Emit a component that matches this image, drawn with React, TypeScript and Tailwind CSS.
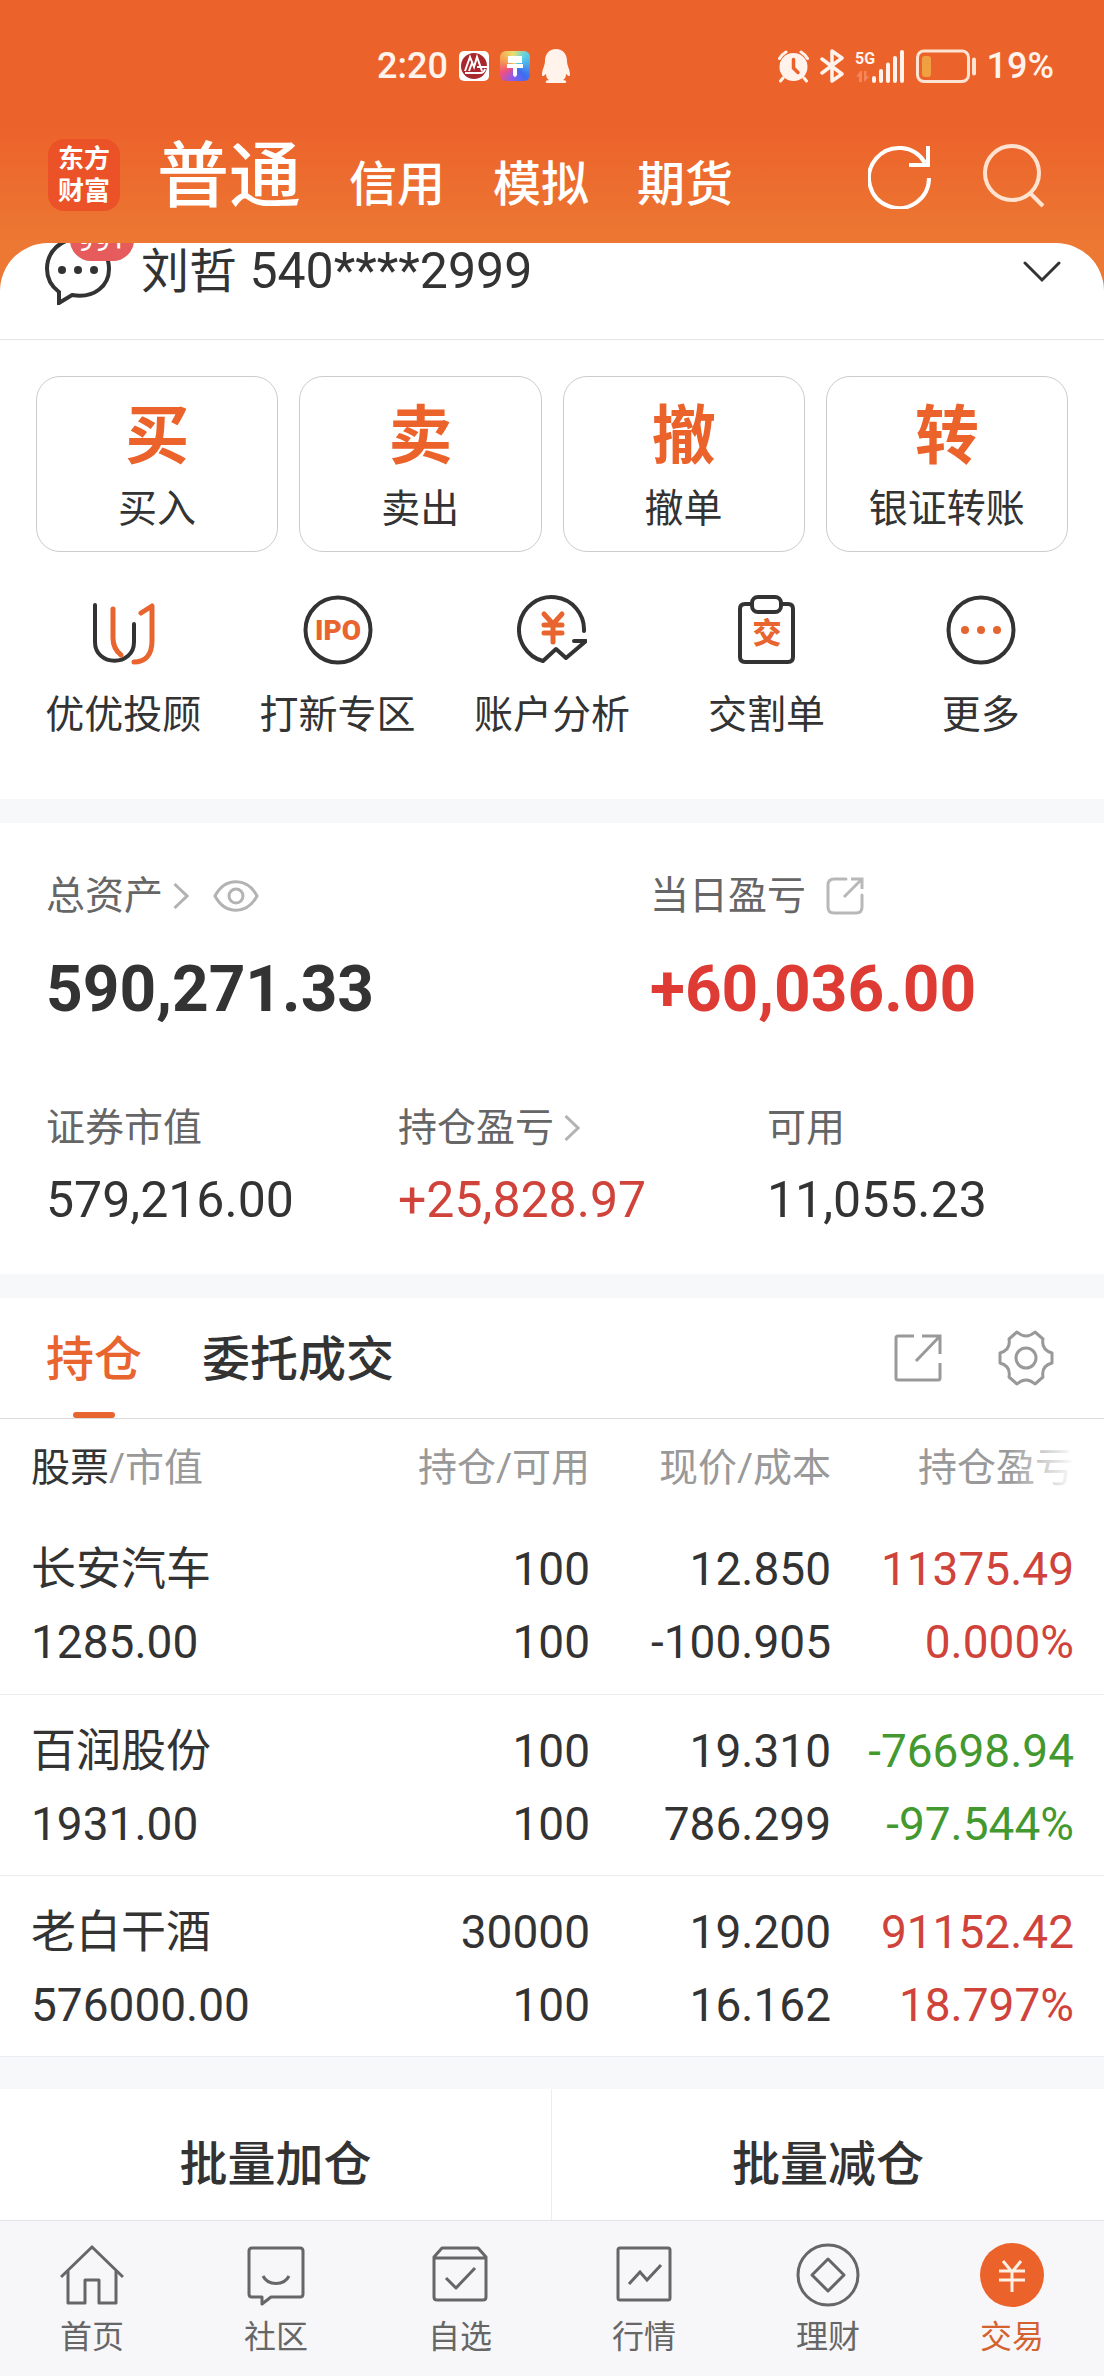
import React from "react";

interface Holding {
  name: string;
  marketValue: string;
  position: string;
  available: string;
  price: string;
  cost: string;
  profit: string;
  profitRate: string;
}

const holdings: Holding[] = [
  { name: "长安汽车", marketValue: "1285.00", position: "100", available: "100", price: "12.850", cost: "-100.905", profit: "11375.49", profitRate: "0.000%" },
  { name: "百润股份", marketValue: "1931.00", position: "100", available: "100", price: "19.310", cost: "786.299", profit: "-76698.94", profitRate: "-97.544%" },
  { name: "老白干酒", marketValue: "576000.00", position: "30000", available: "100", price: "19.200", cost: "16.162", profit: "91152.42", profitRate: "18.797%" },
];

const tradeActions = [
  { mark: "买", label: "买入" },
  { mark: "卖", label: "卖出" },
  { mark: "撤", label: "撤单" },
  { mark: "转", label: "银证转账" },
];

const AlarmIcon = () => (
  <svg viewBox="0 0 31 33" className="w-[31px] h-[33px]" fill="none">
    <circle cx="15.500" cy="17" r="14" fill="#fff3ec" />
    <path d="M1.500 8.500 A18 18 0 0 1 8 2 M29.500 8.500 A18 18 0 0 0 23 2" stroke="#fff3ec" strokeWidth="3" strokeLinecap="round" />
    <path d="M5 28 L2.500 31 M26 28 L28.500 31" stroke="#fff3ec" strokeWidth="3" strokeLinecap="round" />
    <path d="M15.500 9.500 V18 L20 22.500" stroke="#ec622b" strokeWidth="3.500" strokeLinecap="round" />
  </svg>
);

const BluetoothIcon = () => (
  <svg viewBox="0 0 24 34" className="w-6 h-[34px]" fill="none" stroke="#fff3ec" strokeWidth="3.500" strokeLinejoin="round" strokeLinecap="round">
    <path d="M2 10 L22 25 L12 32 V2 L22 9 L2 24" />
  </svg>
);

const SignalIcon = () => (
  <svg viewBox="0 0 50 33" className="w-[50px] h-[33px] overflow-visible">
    <text x="0" y="14" fontSize="16" fontWeight="700" fontFamily="Roboto, sans-serif" fill="#fff3ec">5G</text>
    <path d="M5.500 21 L1 26.500 H4 V32 H7 V21 Z M9 21 V32 L14.500 26.500 H11.500 V21 Z" fill="#f5855a" />
    <path d="M19 28 V31 M26 21 V31 M33 14.500 V31 M40 8 V31 M47 2 V31" stroke="#fff3ec" strokeWidth="4" strokeLinecap="round" />
  </svg>
);

const BatteryIcon = () => (
  <svg viewBox="0 0 60 34" className="w-[60px] h-[34px]" fill="none">
    <rect x="1.500" y="2" width="51" height="30.500" rx="6.500" stroke="#fde3d3" strokeWidth="3" />
    <rect x="6" y="7" width="9" height="21" rx="3" fill="#f0a040" />
    <rect x="56" y="8.500" width="4" height="18" rx="2" fill="#fde3d3" />
  </svg>
);

const ShareIcon = ({ className, rounded }: { className: string; rounded?: boolean }) =>
  rounded ? (
    <svg viewBox="0 0 38 38" className={className} fill="none" stroke="currentColor" strokeWidth="3">
      <path d="M20 2 H8 Q2 2 2 8 V30 Q2 36 8 36 H30 Q36 36 36 30 V18" strokeLinecap="round" />
      <path d="M25 2 H36 V12 M36 2 L18 20" />
    </svg>
  ) : (
    <svg viewBox="0 0 48 48" className={className} fill="none" stroke="currentColor" strokeWidth="3">
      <path d="M20 2 H4 Q2 2 2 4 V44 Q2 46 4 46 H44 Q46 46 46 44 V29" />
      <path d="M28 2 H46 V20 M46 2 L22 27" />
    </svg>
  );

const Chevron = () => (
  <svg viewBox="0 0 16 26" className="w-4 h-[26px] text-[#b3b3b3]" fill="none" stroke="currentColor" strokeWidth="3">
    <path d="M1.500 1 L14 13 L1.500 25" />
  </svg>
);

const serviceIcon = "w-[70px] h-[70px]";

const services = [
  {
    label: "优优投顾",
    icon: (
      <svg viewBox="0 0 70 70" className={serviceIcon} fill="none" strokeLinecap="round" strokeLinejoin="round">
        <path d="M7 10 V47 C7 72 46 72 46 47 V29" stroke="#333" strokeWidth="4" />
        <path d="M25 14 V43 C25 51 28 56 33 60" stroke="#e8652f" strokeWidth="5" />
        <path d="M53 18 L64 11 V46 C64 60 57 67 46 67" stroke="#e8652f" strokeWidth="5" />
      </svg>
    ),
  },
  {
    label: "打新专区",
    icon: (
      <svg viewBox="0 0 70 70" className={serviceIcon} fill="none">
        <circle cx="35" cy="35" r="32.500" stroke="#333" strokeWidth="4" />
        <text x="35" y="45" textAnchor="middle" fontSize="28" fontWeight="900" fontFamily="Roboto, sans-serif" fill="#e8652f">IPO</text>
      </svg>
    ),
  },
  {
    label: "账户分析",
    icon: (
      <svg viewBox="0 0 70 70" className={serviceIcon} fill="none" stroke="#333" strokeWidth="4" strokeLinecap="round" strokeLinejoin="round">
        <path d="M67 36 A32.500 32.500 0 1 0 26 66 L39 54 L49 63 L69 46 H57" />
        <path d="M27 19 L36 29 L45 19 M27 30 H45 M27 38 H45 M36 29 V47" stroke="#e8652f" strokeWidth="5" />
      </svg>
    ),
  },
  {
    label: "交割单",
    icon: (
      <svg viewBox="0 0 70 70" className={serviceIcon} fill="none" stroke="#333" strokeWidth="4">
        <path d="M21 9 H14 Q9 9 9 14 V62 Q9 67 14 67 H57 Q62 67 62 62 V14 Q62 9 57 9 H50" />
        <rect x="21" y="2" width="29" height="15" rx="6" />
        <text x="36" y="49" textAnchor="middle" fontSize="29" fontWeight="900" fontFamily="'Noto Sans CJK SC', sans-serif" fill="#e8652f" stroke="none">交</text>
      </svg>
    ),
  },
  {
    label: "更多",
    icon: (
      <svg viewBox="0 0 70 70" className={serviceIcon} fill="none">
        <circle cx="35" cy="35" r="32.500" stroke="#333" strokeWidth="4" />
        <g fill="#e8652f">
          <circle cx="19" cy="35" r="4" />
          <circle cx="35" cy="35" r="4" />
          <circle cx="51" cy="35" r="4" />
        </g>
      </svg>
    ),
  },
];

const navIcon = "w-16 h-16";

const navItems = [
  {
    label: "首页",
    icon: (
      <svg viewBox="0 0 64 64" className={navIcon} fill="none" stroke="currentColor" strokeWidth="3">
        <path d="M1 34 L32 4 L63 34" />
        <path d="M8 28 V60 H25 V37 H39 V60 H56 V28" strokeLinejoin="round" />
      </svg>
    ),
  },
  {
    label: "社区",
    icon: (
      <svg viewBox="0 0 64 64" className={navIcon} fill="none" stroke="currentColor" strokeWidth="3" strokeLinejoin="round">
        <path d="M8 5 H56 Q59 5 59 8 V51 Q59 54 56 54 H27 L18 61 V54 H8 Q5 54 5 51 V8 Q5 5 8 5 Z" />
        <path d="M19 33 C24 43 40 43 45 33" />
      </svg>
    ),
  },
  {
    label: "自选",
    icon: (
      <svg viewBox="0 0 64 64" className={navIcon} fill="none" stroke="currentColor" strokeWidth="3" strokeLinejoin="round">
        <path d="M6 14 L14 5 H50 L58 14 V54 Q58 57 55 57 H9 Q6 57 6 54 Z M6 15 H58" />
        <path d="M18 35 L28 45 L47 25" />
      </svg>
    ),
  },
  {
    label: "行情",
    icon: (
      <svg viewBox="0 0 64 64" className={navIcon} fill="none" stroke="currentColor" strokeWidth="3">
        <rect x="6" y="5" width="52" height="52" rx="2" />
        <path d="M17 41 L28 29 L35 37 L49 22" />
      </svg>
    ),
  },
  {
    label: "理财",
    icon: (
      <svg viewBox="0 0 64 64" className={navIcon} fill="none" stroke="currentColor" strokeWidth="3" strokeLinejoin="round">
        <circle cx="32" cy="32" r="30" />
        <path d="M32 16 L48 32 L32 48 L16 32 Z" />
      </svg>
    ),
  },
  {
    label: "交易",
    active: true,
    icon: (
      <svg viewBox="0 0 64 64" className={navIcon} fill="none">
        <circle cx="32" cy="32" r="32" fill="#ec622b" />
        <path d="M23 18 L32 29 L41 18 M19 28 H45 M19 37 H45 M32 28 V49" stroke="#fff0e6" strokeWidth="3" />
      </svg>
    ),
  },
];

const StatusBar = () => (
  <div className="flex h-[132px] items-center justify-between pl-[377px] pr-[50px] text-[36px] font-medium text-[#fff3ec]">
    <div className="flex items-center gap-[11px]">
      <span>2:20</span>
      <svg viewBox="0 0 30 30" className="w-[30px] h-[30px]" fill="none">
        <rect width="30" height="30" rx="5" fill="#fff" />
        <circle cx="15" cy="15" r="13" fill="#a8282e" />
        <path d="M6 20 L11 6 L15 16 L18 6 L23 20 M13 12 L10 20 M18 16 H28 M6 22 H21 Q25 22 26 18" stroke="#fff" strokeWidth="2" />
      </svg>
      <div className="flex h-[30px] w-[30px] items-center justify-center rounded-md bg-[conic-gradient(from_45deg,#5ad0e8,#3c6cf0_25%,#8a5cf0_40%,#f0507c_55%,#f5a050_70%,#e8e070_85%,#5ad0e8)]">
        <svg viewBox="0 0 20 24" className="h-6 w-5" fill="#fff">
          <path d="M3 2 H17 V9 H3 Z M2 10 H18 V14 H12 V21 Q10 25 8 21 V14 H2 Z" />
        </svg>
      </div>
      <svg viewBox="0 0 30 34" className="w-[30px] h-[34px]" fill="#fff3ec">
        <path d="M15 0 C8 0 4 5 4 12 C4 17 1 20 1 26 C1 28 3 27 5 25 C5 28 6 30 8 31 C4 31 4 34 6 34 H24 C26 34 26 31 22 31 C24 30 25 28 25 25 C27 27 29 28 29 26 C29 20 26 17 26 12 C26 5 22 0 15 0 Z" />
      </svg>
    </div>
    <div className="flex items-center gap-[11px]">
      <AlarmIcon />
      <BluetoothIcon />
      <SignalIcon />
      <BatteryIcon />
      <span>19%</span>
    </div>
  </div>
);

const AccountTabs = () => (
  <header className="flex h-[111px] items-start pl-12 pr-[58px] pt-[7px] text-white">
    <div className="flex h-[72px] w-[72px] flex-col items-center justify-center rounded-2xl bg-[#ec5228] text-[26px] font-bold leading-8">
      <span>东方</span>
      <span>财富</span>
    </div>
    <nav className="ml-[37px] mt-1 flex h-[72px] items-baseline gap-12 font-medium leading-[68px]">
      <a href="#normal" className="text-[72px]">普通</a>
      <a href="#credit" className="text-[48px]">信用</a>
      <a href="#mock" className="text-[48px]">模拟</a>
      <a href="#futures" className="text-[48px]">期货</a>
    </nav>
    <div className="ml-auto flex items-center gap-[50px] pt-1">
      <button aria-label="刷新">
        <svg viewBox="0 0 64 66" className="h-[66px] w-16" fill="none" stroke="currentColor" strokeWidth="4">
          <path d="M61 35 A30 30 0 1 1 57 20" />
          <path d="M60 3 V22 H41" />
        </svg>
      </button>
      <button aria-label="搜索" className="text-[#ffe3d0]">
        <svg viewBox="0 0 64 66" className="h-[66px] w-16" fill="none" stroke="currentColor" strokeWidth="4">
          <circle cx="30" cy="30" r="27" />
          <path d="M48 50 L61 63" />
        </svg>
      </button>
    </div>
  </header>
);

const AccountRow = () => (
  <div className="relative flex h-[97px] items-start overflow-hidden border-b border-[#e5e5e5] pl-[45px] pr-[43px]">
    <svg viewBox="0 0 66 70" className="-mt-[8px] h-[70px] w-[66px]" fill="none">
      <path d="M14 57 V68 L27 60 C50 64 64 50 64 34 C64 16 50 4 33 4 C16 4 2 16 2 34 C2 44 6 51 14 57 Z" stroke="#333" strokeWidth="4" />
      <g fill="#333">
        <circle cx="17" cy="35" r="4" />
        <circle cx="33" cy="35" r="4" />
        <circle cx="49" cy="35" r="4" />
      </g>
    </svg>
    <span className="absolute -top-[24px] left-[70px] flex h-[42px] w-[64px] items-center justify-center rounded-full bg-[#e65c5c] text-[30px] text-white">99+</span>
    <button className="ml-[30px] flex flex-1 items-center justify-between text-left text-[50px] leading-[56px] text-[#333]">
      <span><span className="text-[48px]">刘哲</span> 540****2999</span>
      <svg viewBox="0 0 38 22" className="h-[22px] w-[38px]" fill="none" stroke="#333" strokeWidth="3" strokeLinecap="round">
        <path d="M2 2 L19 19 L36 2" />
      </svg>
    </button>
  </div>
);

const AssetSummary = () => (
  <section className="border-y-[24px] border-[#f7f8fa] px-[46px] pb-[44px] pt-[43px] text-[39px] text-[#666]">
    <div className="grid grid-cols-[604px_1fr]">
      <div>
        <div className="flex h-[60px] items-center">
          <span>总资产</span>
          <span className="ml-[10px]"><Chevron /></span>
          <button aria-label="隐藏金额" className="ml-6 text-[#b3b3b3]">
            <svg viewBox="0 0 46 32" className="h-8 w-[46px]" fill="none" stroke="currentColor" strokeWidth="3">
              <path d="M2 16 C12 -3 34 -3 44 16 C34 35 12 35 2 16 Z" />
              <circle cx="23" cy="16" r="7" />
            </svg>
          </button>
        </div>
        <p className="mt-7 text-[64px] font-bold leading-[72px] text-[#333]">590,271.33</p>
      </div>
      <div>
        <div className="flex h-[60px] items-center">
          <span>当日盈亏</span>
          <button aria-label="分享当日盈亏" className="ml-5 text-[#b8b8b8]"><ShareIcon rounded className="h-[38px] w-[38px]" /></button>
        </div>
        <p className="mt-7 text-[64px] font-bold leading-[72px] text-[#dd3b33]">+60,036.00</p>
      </div>
    </div>
    <div className="mt-[72px] grid grid-cols-[352px_369px_1fr] leading-[60px]">
      <div>
        <p>证券市值</p>
        <p className="mt-3 text-[50px] text-[#333]">579,216.00</p>
      </div>
      <div>
        <p className="flex items-center gap-[10px]">持仓盈亏 <Chevron /></p>
        <p className="mt-3 text-[50px] text-[#cf433b]">+25,828.97</p>
      </div>
      <div>
        <p>可用</p>
        <p className="mt-3 text-[50px] text-[#333]">11,055.23</p>
      </div>
    </div>
  </section>
);

const HoldingsTable = () => (
  <section>
    <div className="flex h-[121px] items-stretch justify-between border-b border-[#dcdcdc] pl-[46px] pr-[50px]">
      <div className="flex gap-[60px] text-[48px] font-medium text-[#333]">
        <button className="relative pt-1 text-[#e8652f]">
          持仓
          <span className="absolute bottom-0 left-1/2 h-[6px] w-[42px] -translate-x-1/2 rounded-full bg-[#e8652f]" />
        </button>
        <button className="pt-1">委托成交</button>
      </div>
      <div className="flex items-center gap-14 text-[#999]">
        <button aria-label="分享持仓"><ShareIcon className="h-12 w-12" /></button>
        <button aria-label="设置">
          <svg viewBox="0 0 56 56" className="h-14 w-14" fill="none" stroke="currentColor" strokeWidth="3" strokeLinejoin="round">
            <path d="M11 9 L19 2 Q28 10 37 2 L45 9 Q43 20 54 23 V33 Q43 36 45 47 L37 54 Q28 46 19 54 L11 47 Q13 36 2 33 V23 Q13 20 11 9 Z" />
            <circle cx="28" cy="28" r="10" />
          </svg>
        </button>
      </div>
    </div>
    <table className="w-full text-right text-[46px] text-[#333]">
      <thead className="text-[39px] text-[#999]">
        <tr className="h-[94px]">
          <th className="pl-[31px] pt-1 text-left font-normal"><span className="text-[#333]">股票</span>/市值</th>
          <th className="pt-1 font-normal">持仓/可用</th>
          <th className="w-[241px] pt-1 font-normal">现价/成本</th>
          <th className="relative w-[273px] pr-[30px] pt-1 font-normal">
            持仓盈亏
            <span className="absolute inset-y-0 right-0 w-[95px] bg-linear-to-r from-white/0 to-white to-70%" />
          </th>
        </tr>
      </thead>
      <tbody>
        {holdings.map((item) => (
          <tr key={item.name} className="h-[181px] border-b border-[#ebedf0] leading-[73px]">
            <td className="pl-[31px] pt-[6px] text-left">
              <p className="text-[45px]">{item.name}</p>
              <p>{item.marketValue}</p>
            </td>
            <td className="pt-[6px]">
              <p>{item.position}</p>
              <p>{item.available}</p>
            </td>
            <td className="pt-[6px]">
              <p>{item.price}</p>
              <p>{item.cost}</p>
            </td>
            <td className={item.profit.startsWith("-") ? "pr-[30px] pt-[6px] text-[#43992f]" : "pr-[30px] pt-[6px] text-[#cf433b]"}>
              <p>{item.profit}</p>
              <p>{item.profitRate}</p>
            </td>
          </tr>
        ))}
      </tbody>
    </table>
  </section>
);

const App: React.FC = () => {
  return (
    <div className="flex min-h-screen flex-col bg-[linear-gradient(#ec622b_125px,#ec7833_243px)] font-[Roboto,'Noto_Sans_CJK_SC',sans-serif]">
      <StatusBar />
      <AccountTabs />
      <main className="flex-1 overflow-hidden rounded-t-[48px] bg-white">
        <AccountRow />

        <section className="pb-[54px] pt-9 text-[39px] text-[#333]">
          <div className="grid grid-cols-4 gap-[21px] px-9">
            {tradeActions.map((action) => (
              <button key={action.label} className="flex h-[176px] flex-col items-center rounded-3xl border border-[#ccc] pt-6">
                <span className="text-[64px] font-bold leading-[72px] text-[#ec622b]">{action.mark}</span>
                <span className="mt-[6px] leading-[60px]">{action.label}</span>
              </button>
            ))}
          </div>
          <div className="mt-[43px] grid grid-cols-5 px-4">
            {services.map((service) => (
              <button key={service.label} className="flex flex-col items-center gap-5 leading-[60px]">
                {service.icon}
                <span>{service.label}</span>
              </button>
            ))}
          </div>
        </section>

        <AssetSummary />
        <HoldingsTable />

        {/* Batch actions */}
        <div className="grid grid-cols-2 border-t-[32px] border-[#f7f8fa] text-[48px] font-medium text-[#333]">
          <button className="h-[131px] border-r border-[#ebedf0] pt-[22px]">批量加仓</button>
          <button className="h-[131px] pt-[22px]">批量减仓</button>
        </div>
      </main>

      <nav className="sticky bottom-0 grid h-[157px] grid-cols-6 border-t border-[#e3e4e6] bg-[#f7f7fa] text-[32px] text-[#666]">
        {navItems.map((item) => (
          <a key={item.label} href={`#${item.label}`} className={item.active ? "flex flex-col items-center pt-[22px] text-[#d4622f]" : "flex flex-col items-center pt-[22px]"}>
            {item.icon}
            <span className="mt-2 leading-[44px]">{item.label}</span>
          </a>
        ))}
      </nav>
    </div>
  );
};

export default App;
